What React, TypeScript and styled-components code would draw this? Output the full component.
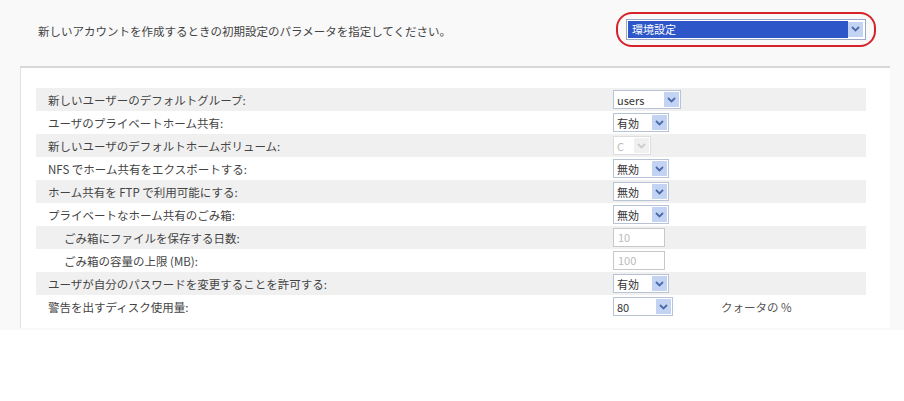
import styled, { createGlobalStyle } from "styled-components";

const Global = createGlobalStyle`
  body { margin: 0; background: #fff; font-family: "Noto Sans CJK JP", "DejaVu Sans", sans-serif; color: #333; }
`;

const Page = styled.div`
  width: 904px;
  height: 401px;
  background: linear-gradient(#f9f9f9, #f9f9f9 330px, #fff 330px);
  padding: 0 14px 0 20px;
  box-sizing: border-box;
`;

const Header = styled.div`
  display: flex;
  align-items: center;
  justify-content: space-between;
  height: 62px;
  padding: 0 14px 4px 18px;
  font-size: 11.5px;
  color: #444;
`;

const Ring = styled.div`
  border: 2px solid #d6232a;
  border-radius: 16px;
  padding: 5px 8px;
  margin-top: -4px;
`;

const BigSelect = styled.div`
  width: 240px;
  height: 21px;
  border: 1px solid #9aa9c8;
  background: #fff;
  display: flex;
  align-items: center;
  padding: 1px;
  box-sizing: border-box;
`;

const Chosen = styled.div`
  flex: 1;
  height: 100%;
  background: #2d57c8;
  color: #fff;
  font-size: 11px;
  line-height: 17px;
  padding-left: 4px;
`;

const Panel = styled.div`
  border-top: 2px solid #d8d8d8;
  border-left: 1px solid #e0e0e0;
  background: #fff;
  padding: 20px 0 10px 15px;
  display: flex;
`;

const Table = styled.div`
  width: 830px;
`;

const Row = styled.div<{ $shade: boolean }>`
  display: flex;
  align-items: center;
  height: 23px;
  background: ${(p) => (p.$shade ? "#f0f0f0" : "#fff")};
  font-size: 11.5px;
`;

const Label = styled.div<{ $indent: boolean }>`
  width: 577px;
  padding-left: ${(p) => (p.$indent ? 28 : 12)}px;
  box-sizing: border-box;
  color: #444;
`;

const Sel = styled.div<{ $w: number; $off?: boolean }>`
  width: ${(p) => p.$w}px;
  height: 19px;
  border: 1px solid ${(p) => (p.$off ? "#ddd" : "#b9c3d6")};
  background: #fff;
  display: flex;
  align-items: center;
  justify-content: space-between;
  box-sizing: border-box;
  padding-left: 3px;
  font-size: 11px;
  color: ${(p) => (p.$off ? "#bbb" : "#333")};
`;

const Arrow = styled.div<{ $off?: boolean }>`
  width: 15px;
  height: 15px;
  margin-right: 1px;
  background: ${(p) => (p.$off ? "#f0f0f0" : "#c3d3f4")};
  display: flex;
  align-items: center;
  justify-content: center;
`;

const Input = styled.div`
  width: 52px;
  height: 19px;
  border: 1px solid #c8c8c8;
  background: #fff;
  box-sizing: border-box;
  font-size: 11px;
  color: #bbb;
  padding-left: 4px;
  line-height: 17px;
`;

const Note = styled.span`
  margin-left: 48px;
  font-size: 11.5px;
  color: #555;
`;

const Chevron = ({ off }: { off?: boolean }) => (
  <Arrow $off={off}>
    <svg width="9" height="6" viewBox="0 0 9 6">
      <path d="M1 1l3.5 3.5L8 1" stroke={off ? "#ccc" : "#4d6aa8"} strokeWidth="1.8" fill="none" />
    </svg>
  </Arrow>
);

type R = { label: string; kind: "sel" | "input"; value: string; w?: number; indent?: boolean; off?: boolean; note?: string };

const rows: R[] = [
  { label: "新しいユーザーのデフォルトグループ:", kind: "sel", value: "users", w: 68 },
  { label: "ユーザのプライベートホーム共有:", kind: "sel", value: "有効", w: 56 },
  { label: "新しいユーザのデフォルトホームボリューム:", kind: "sel", value: "C", w: 38, off: true },
  { label: "NFS でホーム共有をエクスポートする:", kind: "sel", value: "無効", w: 56 },
  { label: "ホーム共有を FTP で利用可能にする:", kind: "sel", value: "無効", w: 56 },
  { label: "プライベートなホーム共有のごみ箱:", kind: "sel", value: "無効", w: 56 },
  { label: "ごみ箱にファイルを保存する日数:", kind: "input", value: "10", indent: true },
  { label: "ごみ箱の容量の上限 (MB):", kind: "input", value: "100", indent: true },
  { label: "ユーザが自分のパスワードを変更することを許可する:", kind: "sel", value: "有効", w: 56 },
  { label: "警告を出すディスク使用量:", kind: "sel", value: "80", w: 60, note: "クォータの %" },
];

export default function App() {
  return (
    <Page>
      <Global />
      <Header>
        <span>新しいアカウントを作成するときの初期設定のパラメータを指定してください。</span>
        <Ring>
          <BigSelect>
            <Chosen>環境設定</Chosen>
            <Chevron />
          </BigSelect>
        </Ring>
      </Header>
      <Panel>
        <Table>
          {rows.map((r, i) => (
            <Row key={i} $shade={i % 2 === 0}>
              <Label $indent={!!r.indent}>{r.label}</Label>
              {r.kind === "sel" ? (
                <Sel $w={r.w ?? 56} $off={r.off}>
                  {r.value}
                  <Chevron off={r.off} />
                </Sel>
              ) : (
                <Input>{r.value}</Input>
              )}
              {r.note && <Note>{r.note}</Note>}
            </Row>
          ))}
        </Table>
      </Panel>
    </Page>
  );
}
